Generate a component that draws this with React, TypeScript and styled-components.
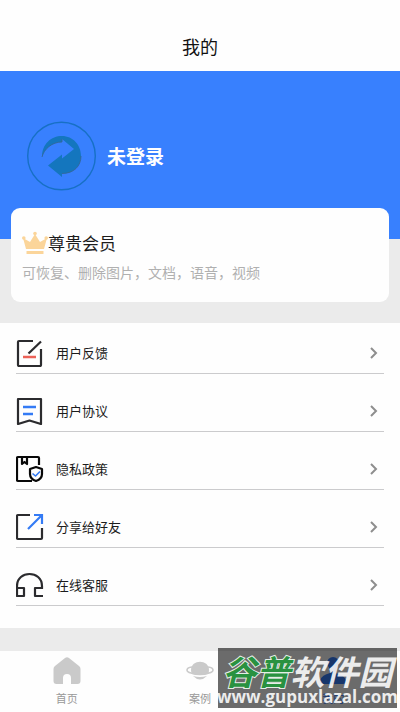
import React from "react";
import styled, { createGlobalStyle } from "styled-components";

const GlobalStyle = createGlobalStyle`
  * { box-sizing: border-box; }
  body {
    margin: 0;
    background: #ebebeb;
    font-family: "Noto Sans CJK SC", sans-serif;
    color: #1c1c1c;
  }
  a { color: inherit; text-decoration: none; }
`;

const Page = styled.div`
  position: relative;
  display: flex;
  flex-direction: column;
  min-height: 100vh;
`;

const Header = styled.header`
  background: #fefefe;
  padding: 31px 0 9px;
  text-align: center;
`;

const Title = styled.h1`
  margin: 0;
  font-size: 18px;
  line-height: 31px;
  font-weight: 400;
  color: #111;
`;

const Profile = styled.section`
  display: flex;
  align-items: center;
  gap: 11px;
  padding: 50px 26px 48px;
  background: #3880fe;
`;

const Avatar = styled.svg`
  width: 70px;
  height: 70px;
`;

const LoginButton = styled.button`
  border: 0;
  padding: 0;
  background: none;
  color: #fff;
  font: inherit;
  font-size: 19px;
  line-height: 28px;
  font-weight: 700;
`;

const MemberCard = styled.section`
  position: relative;
  margin: -31px 11px 21px;
  padding: 23px 11px 18px;
  border-radius: 9px;
  background: #fefefe;
`;

const MemberTitle = styled.h2`
  display: flex;
  align-items: center;
  margin: 0 0 5px;
  font-size: 17px;
  line-height: 24px;
  font-weight: 400;
`;

const MemberText = styled.p`
  margin: 0;
  font-size: 14px;
  line-height: 24px;
  color: #b0b0b0;
`;

const Crown = styled.svg`
  width: 26px;
  height: 24px;
`;

const Menu = styled.nav`
  display: flex;
  flex-direction: column;
  gap: 16px;
  padding: 9px 16px 22px;
  background: #fefefe;
`;

const MenuRow = styled.a`
  display: flex;
  align-items: center;
  gap: 12px;
  height: 42px;
  border-bottom: 1px solid #cbcbcd;
`;

const MenuLabel = styled.span`
  flex: 1;
  font-size: 13px;
  line-height: 20px;
`;

const MenuIcon = styled.svg`
  width: 28px;
  height: 28px;
  fill: none;
  stroke: #2b2b2e;
  stroke-width: 2.2;
  stroke-linejoin: round;
`;

const Chevron = styled.svg`
  width: 22px;
  height: 14px;
  fill: none;
  stroke: #8e8e8e;
  stroke-width: 2;
`;

const TabBar = styled.nav`
  display: grid;
  grid-template-columns: repeat(3, 1fr);
  margin-top: auto;
  padding: 4px 0 5px;
  background: #fefefe;
`;

const Tab = styled.a<{ $active?: boolean }>`
  display: flex;
  flex-direction: column;
  align-items: center;
  gap: 3px;
  font-size: 11px;
  line-height: 18px;
  color: ${(p) => (p.$active ? "#3880fe" : "#999")};
`;

const TabIcon = styled.svg<{ $active?: boolean }>`
  width: 30px;
  height: 31px;
  fill: ${(p) => (p.$active ? "#3880fe" : "#cacaca")};
`;

const Watermark = styled.aside`
  position: absolute;
  right: 3px;
  bottom: 4px;
  width: 179px;
  height: 60px;
  padding-top: 6px;
  display: flex;
  flex-direction: column;
  align-items: center;
  background: rgba(0, 0, 0, 0.58);
  color: rgba(255, 255, 255, 0.88);
  white-space: nowrap;
  pointer-events: none;
`;

const SiteName = styled.span`
  font-size: 34px;
  line-height: 34px;
  font-weight: 700;
  font-style: italic;
`;

const SiteAccent = styled.span`
  color: #299240;
  paint-order: stroke fill;
  -webkit-text-stroke: 2px #e4eee6;
`;

const SiteUrl = styled.span`
  font-family: "Open Sans", "Noto Sans", sans-serif;
  font-size: 17px;
  line-height: 18px;
  font-weight: 700;
`;

const blue = "#347bf5";

const rows: { label: string; icon: React.ReactNode }[] = [
  {
    label: "用户反馈",
    icon: (
      <>
        <path d="M17 2H3Q2 2 2 3V26Q2 27 3 27H24Q25 27 25 26V10" />
        <path d="M12.500 14.500L25 2.500" />
        <path d="M7 18H20" stroke="#ec6258" strokeWidth="2.500" />
      </>
    ),
  },
  {
    label: "用户协议",
    icon: (
      <>
        <path d="M2 2H25V27L13.500 23.500L2 27Z" />
        <path d="M7 10H20M7 17H17" stroke={blue} strokeWidth="2.500" />
      </>
    ),
  },
  {
    label: "隐私政策",
    icon: (
      <g stroke="#080808">
        <path d="M23 10V3Q23 2 22 2H2Q1 2 1 3V25Q1 26 2 26H16" />
        <path d="M6 2V9L8.500 7L11 9V2" />
        <path d="M20 12L26 14V19Q26 24 20 26Q14 24 14 19V14Z" />
        <path d="M16.500 18.500L19.500 21L24 16.500" stroke={blue} strokeWidth="1.600" />
      </g>
    ),
  },
  {
    label: "分享给好友",
    icon: (
      <>
        <path d="M14 2H2Q1 2 1 3V25Q1 26 2 26H25Q26 26 26 25V15" />
        <path d="M12 16L25 3M18 2H26V11" stroke={blue} strokeLinejoin="miter" />
      </>
    ),
  },
  {
    label: "在线客服",
    icon: (
      <>
        <path d="M1 18V15C1 -1 26 -1 26 15V18" />
        <path d="M1 17H8V25H1ZM27 17H19V25H27" />
      </>
    ),
  },
];

export default function App() {
  return (
    <>
      <GlobalStyle />
      <Page>
        <Header>
          <Title>我的</Title>
        </Header>
        <main>
          <Profile>
            <Avatar viewBox="0 0 70 70" aria-hidden="true">
              <circle cx="35.500" cy="35" r="33.800" fill="none" stroke="#1770c5" strokeWidth="1.400" />
              <path
                d="M16 36C16 23 25 15 36 15C47 15 55 24 55 35C55 45 48 52.500 36 52.500V56L22 44.500L36 33.500V37.500L48 28L36 18V21C26 21 18 28 16 36Z"
                fill="#1476be"
              />
              <path d="M55 35C55 45 48 52.500 36 52.500M16 36C18 28 26 21 36 21V18" fill="none" stroke="#35648f" strokeWidth=".8" />
            </Avatar>
            <LoginButton type="button">未登录</LoginButton>
          </Profile>
          <MemberCard>
            <MemberTitle>
              <Crown viewBox="0 0 26 24" fill="#fbd59a" aria-hidden="true">
                <path d="M4 18L1 7L8 11L13 3L18 11L25 7L22 18ZM4.500 20H21.500V23H4.500Z" />
                <circle cx="1.800" cy="7" r="1.800" />
                <circle cx="13" cy="2.500" r="1.800" />
                <circle cx="24.200" cy="7" r="1.800" />
              </Crown>
              尊贵会员
            </MemberTitle>
            <MemberText>可恢复、删除图片，文档，语音，视频</MemberText>
          </MemberCard>
          <Menu>
            {rows.map((row) => (
              <MenuRow href="#" key={row.label}>
                <MenuIcon viewBox="0 0 28 28" aria-hidden="true">{row.icon}</MenuIcon>
                <MenuLabel>{row.label}</MenuLabel>
                <Chevron viewBox="0 0 22 14" aria-hidden="true">
                  <path d="M9 2L14 7L9 12" />
                </Chevron>
              </MenuRow>
            ))}
          </Menu>
        </main>
        <TabBar>
          <Tab href="#">
            <TabIcon viewBox="0 0 30 31" aria-hidden="true">
              <path d="M13 3Q15 1.500 17 3L27 11Q28.500 12 28.500 14V26Q28.500 29 25.500 29H19V23Q19 19 15 19Q11 19 11 23V29H4.500Q1.500 29 1.500 26V14Q1.500 12 3 11Z" />
            </TabIcon>
            首页
          </Tab>
          <Tab href="#">
            <TabIcon viewBox="0 0 30 31" aria-hidden="true">
              <path d="M6 15C6 4 24 4 24 15Q24 18 23 19Q15 21 7 19Q6 17 6 15Z" />
              <path d="M8 21Q15 23 22 21Q15 28 8 21Z" />
              <path d="M7 12C0 13 1 17 6 18Q15 21 24 18C29 17 30 13 23 12" fill="none" stroke="#cacaca" strokeWidth="1.600" />
            </TabIcon>
            案例
          </Tab>
          <Tab href="#" $active aria-current="page">
            <TabIcon $active viewBox="0 0 30 31" aria-hidden="true">
              <circle cx="15" cy="8" r="6" />
              <path d="M11 13H19L18 18Q26 20 28 25Q29 29 25 29H5Q1 29 2 25Q4 20 12 18Z" />
            </TabIcon>
            我的
          </Tab>
        </TabBar>
        <Watermark>
          <SiteName>
            <SiteAccent>谷普</SiteAccent>软件园
          </SiteName>
          <SiteUrl>www.gupuxlazal.com</SiteUrl>
        </Watermark>
      </Page>
    </>
  );
}
